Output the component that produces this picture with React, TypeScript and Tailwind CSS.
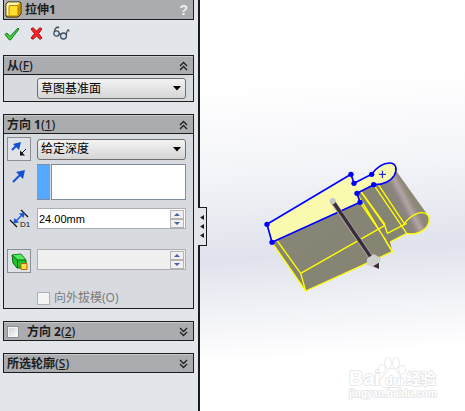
import type { ReactNode } from 'react'

const FONT = "font-['Noto_Sans','Noto_Sans_CJK_SC',sans-serif]"

interface ChevronProps {
  up?: boolean
}

// Double chevron used in the section headers
function Chevron({ up = false }: ChevronProps) {
  return (
    <svg width="9" height="10" viewBox="0 0 9 10" fill="none" stroke="#222" strokeWidth="1.4">
      {up ? <path d="M1 5l3.5-3.5L8 5M1 9l3.5-3.5L8 9" /> : <path d="M1 1l3.5 3.5L8 1M1 5l3.5 3.5L8 5" />}
    </svg>
  )
}

interface SectionProps {
  title: string
  hotkey: string
  open?: boolean
  checkbox?: boolean
  children?: ReactNode
}

function Section({ title, hotkey, open = false, checkbox = false, children }: SectionProps) {
  return (
    <section className="border border-[#1c1c1c] bg-[#d7dbe0]">
      <div className="flex h-[18px] items-center border-t border-[#c9cace] bg-[#abacb0] pr-[5px] pl-[3px] text-[#1c1c1c]">
        {checkbox && (
          <input
            type="checkbox"
            aria-label={title}
            className="mr-2 size-3 appearance-none border border-[#8e8f8f] bg-linear-to-br from-[#cbcfd5] to-white outline-1 -outline-offset-2 outline-[#f4f4f4]"
          />
        )}
        <h2 className="grow text-xs font-bold">
          {title}
          <span className="font-medium">
            (<u>{hotkey}</u>)
          </span>
        </h2>
        <button type="button" aria-label={title}>
          <Chevron up={open} />
        </button>
      </div>
      {children}
    </section>
  )
}

interface ComboProps {
  label: string
  value: string
}

function Combo({ label, value }: ComboProps) {
  return (
    <div className="relative grow">
      <select
        aria-label={label}
        className="block h-[21px] w-full appearance-none rounded-[3px] border border-[#707070] bg-linear-to-b from-[#f3f3f3] to-[#d6d6d6] pl-[3px] text-xs text-black"
      >
        <option>{value}</option>
      </select>
      <svg className="pointer-events-none absolute top-2 right-[5px]" width="8" height="5" viewBox="0 0 8 5">
        <path d="M0 0h8L4 4.5z" fill="#000" />
      </svg>
    </div>
  )
}

interface SpinBoxProps {
  label: string
  value?: string
  disabled?: boolean
}

function SpinBox({ label, value = '', disabled = false }: SpinBoxProps) {
  return (
    <div className={`flex h-[21px] grow items-center border border-[#abadb3] pr-px ${disabled ? 'bg-[#f0f0f0]' : 'bg-white'}`}>
      <input
        aria-label={label}
        defaultValue={value}
        disabled={disabled}
        className="h-full w-0 grow bg-transparent pl-px font-['Liberation_Sans',sans-serif] text-[11px] text-black"
      />
      <div className="flex w-[14px] flex-col">
        <button type="button" aria-label="+" className="flex h-[9px] items-center justify-center border border-[#b4b4b4] bg-[#f0f0f0]">
          <svg width="6" height="3" viewBox="0 0 6 3">
            <path d="M3 0l3 3H0z" fill="#4a62a8" />
          </svg>
        </button>
        <button type="button" aria-label="-" className="flex h-[9px] items-center justify-center border border-[#b4b4b4] bg-[#f0f0f0]">
          <svg width="6" height="3" viewBox="0 0 6 3">
            <path d="M0 0h6L3 3z" fill="#4a62a8" />
          </svg>
        </button>
      </div>
    </div>
  )
}

function ExtrudeIcon() {
  return (
    <svg width="17" height="17" viewBox="0 0 17 17" strokeLinejoin="round">
      <path d="M1 3l2-2h12l1 1v11l-3 3H2l-1-1z" fill="#f0b400" stroke="#2a2200" />
      <path d="M3 1.500h11.500l-2 2.500H4v10.500L1.500 14V3z" fill="#fff6b8" />
      <path d="M13 5l2.500-2.500V13L13 15z" fill="#c98a00" />
      <rect x="4" y="4.500" width="9" height="10.500" rx="1" fill="#ffe030" stroke="#b97f00" />
    </svg>
  )
}

function CheckIcon() {
  return (
    <svg width="16" height="14" viewBox="0 0 16 14" strokeLinejoin="round">
      <path d="M1 7.500l2-1.500 3 3.500L14 1l1 1-8.500 11h-1z" fill="#3fd63f" stroke="#14761a" />
    </svg>
  )
}

function CrossIcon() {
  return (
    <svg width="13" height="13" viewBox="0 0 13 13" strokeLinejoin="round">
      <path d="M1 2l2-1.300L6.500 4 10 .7 12 2 8.500 6.500 12 11l-2 1.300L6.500 9 3 12.300 1 11l3.500-4.500z" fill="#f22" stroke="#a30b0b" />
    </svg>
  )
}

function GlassesIcon() {
  return (
    <svg width="17" height="15" viewBox="0 0 17 15" fill="none" stroke="#4a5158" strokeWidth="1.300">
      <circle cx="3.500" cy="7.500" r="2.700" fill="#c8e4f6" />
      <circle cx="10.500" cy="10" r="3" fill="#c8e4f6" />
      <path d="M6 8.500q1-1.500 2 0M1.300 6Q2 1.500 5 1l1 1M13.300 9Q14 4 15 4t1 1.500" />
    </svg>
  )
}

function BlueArrow() {
  return (
    <svg width="14" height="14" viewBox="0 0 14 14">
      <path d="M1 13l8-8" stroke="#1450d2" strokeWidth="2" />
      <path d="M4 3l9-2-2 9z" fill="#1450d2" />
    </svg>
  )
}

function ReverseIcon() {
  return (
    <svg width="16" height="16" viewBox="0 0 16 16">
      <path d="M1 9l6-6" stroke="#1450d2" strokeWidth="2" />
      <path d="M2 3l8-2-2 8z" fill="#1450d2" />
      <path d="M15 8l-4 4" stroke="#111" />
      <path d="M9 9.500v5h5z" fill="#111" />
    </svg>
  )
}

function DepthIcon() {
  return (
    <svg width="23" height="21" viewBox="0 0 23 21">
      <path d="M12 2l7 7M1 12l7 7" stroke="#111" strokeWidth="1.300" />
      <path d="M6 14l8-8" stroke="#2257d6" strokeWidth="1.500" />
      <path d="M16 4.500l-1.500 5.500L10 5.500zM4 15.500l1.500-5.500L10 14.500z" fill="#2257d6" />
      <text x="11" y="19" className="font-['Liberation_Sans',sans-serif] text-[8px]" fill="#111">
        D1
      </text>
    </svg>
  )
}

function DraftIcon() {
  return (
    <svg width="17" height="17" viewBox="0 0 17 17" strokeLinejoin="round">
      <path d="M1 2l9-1 5 6v8H6L2 10z" fill="#1ec42c" stroke="#0b6b14" />
      <path d="M2 2l8-.500 4.500 5.500H7z" fill="#54e860" />
      <path d="M1 2l5.500 5H15M6.500 7v8" fill="none" stroke="#0b6b14" />
      <rect x="10" y="10.500" width="6" height="6" fill="#ffe04a" stroke="#b86a00" />
    </svg>
  )
}

// Extruded preview body: sketch profile in blue, edges in yellow
function Model() {
  return (
    <svg width="185" height="150" viewBox="0 0 555 450" strokeLinejoin="round">
      <defs>
        <linearGradient id="body" x1="0" y1="0" x2="1" y2="1">
          <stop offset="0" stopColor="#87877a" />
          <stop offset="1" stopColor="#858370" />
        </linearGradient>
        <linearGradient id="cylinder" gradientUnits="userSpaceOnUse" x1="400" y1="165" x2="476" y2="125">
          <stop offset="0" stopColor="#858372" />
          <stop offset="0.400" stopColor="#8c8480" />
          <stop offset="0.600" stopColor="#b3a5a3" />
          <stop offset="0.800" stopColor="#8e877c" />
          <stop offset="1" stopColor="#8a8a70" />
        </linearGradient>
      </defs>
      <path d="M51 277L315 157l-18-57 53-27 110 150-5 27-50 25 7 30-260 118z" fill="url(#body)" />
      <path d="M356 100L423 62l100 140q2 35-35 47-15 5-33 0l-10-26z" fill="url(#cylinder)" />

      <g fill="none" stroke="#ff0" strokeWidth="4">
        <path d="M51 277l101 146 260-118-20-32" />
        <path d="M65 270l72 100 15 53M137 370l253-144" />
        <path d="M300 100l90 128 7 22 58-30" />
        <path d="M306 130l106 175M315 157l78 114M312 116l78 108" />
        <path d="M356 104l99 146-50 26M366 98l84 126" />
        <path d="M445 225c20-30 48-42 67-35 16 8 14 36-8 51-18 12-36 12-49 9" />
      </g>

      <path
        d="M36 223L288 73l9 27 53-27c14-20 35-35 57-34 17 2 20 20 11 37-10 17-34 29-62 28l-50 26 9 27L51 277z"
        fill="#fafaaf"
        stroke="#00f"
        strokeWidth="5"
      />
      <g fill="#00f">
        <circle cx="36" cy="223" r="8" />
        <circle cx="288" cy="73" r="8" />
        <circle cx="297" cy="100" r="8" />
        <circle cx="350" cy="73" r="8" />
        <circle cx="356" cy="104" r="8" />
        <circle cx="306" cy="130" r="8" />
        <circle cx="315" cy="157" r="8" />
        <circle cx="51" cy="277" r="8" />
      </g>
      <path d="M372 73h21M382 62v22" stroke="#00f" strokeWidth="3" />

      <path d="M233 155L348 322" stroke="#aaa6a8" strokeWidth="15" />
      <path d="M235 156L348 322" stroke="#3a2d33" strokeWidth="10" />
      <circle cx="233" cy="153" r="9" fill="#c6c6c2" />
      <path d="M336 326l20-14 22 12-4 14-19 14-20-8z" fill="#cfcfcf" />
      <path d="M354 349l18-11v19z" fill="#3a2d33" />
    </svg>
  )
}

function Watermark() {
  return (
    <svg
      width="92"
      height="44"
      viewBox="0 0 92 44"
      fill="#fff"
      stroke="#e3e3e5"
      strokeWidth="1.500"
      strokeLinejoin="round"
      className="font-['Liberation_Sans','Noto_Sans_CJK_SC',sans-serif] font-bold [paint-order:stroke]"
    >
      <text x="1" y="28" className="text-[20px]">Bai</text>
      <ellipse cx="34" cy="12" rx="3" ry="4" />
      <ellipse cx="40" cy="6" rx="3" ry="5" />
      <ellipse cx="48" cy="6" rx="3" ry="5" />
      <ellipse cx="54" cy="13" rx="3" ry="4" />
      <path d="M44 12c5 0 6 6 10 9 4 4 1 9-4 9H38c-6 0-8-5-4-9 4-3 5-9 10-9z" />
      <text x="37" y="28" className="text-[13px]">du</text>
      <text x="58" y="27" className="text-[15px]">经验</text>
      <text x="1" y="40" className="text-[10px]">jingyan.baidu.com</text>
    </svg>
  )
}

export default function App() {
  return (
    <div className={`flex h-screen overflow-hidden bg-white leading-4 ${FONT}`}>
      <aside className="relative w-[200px] shrink-0 border-r-2 border-[#1c1c1c] bg-[#e2e6eb] pr-1 pl-[3px]">
        <header className="flex h-5 items-center border-x border-b border-[#1c1c1c] bg-[#abacb0] pr-1 pl-px text-[#1c1c1c]">
          <ExtrudeIcon />
          <h1 className="grow pl-[3px] text-xs font-bold">拉伸1</h1>
          <button type="button" className="px-px font-['Liberation_Sans',sans-serif] text-sm font-bold text-[#f0f0f0]">
            ?
          </button>
        </header>

        <div className="flex h-[35px] items-center gap-[10px] pb-2 pl-px">
          <button type="button" aria-label="OK"><CheckIcon /></button>
          <button type="button" aria-label="Cancel"><CrossIcon /></button>
          <button type="button" aria-label="Preview"><GlassesIcon /></button>
        </div>

        <div className="flex flex-col gap-3">
          <Section title="从" hotkey="F" open>
            <div className="flex border-t border-[#1c1c1c] pt-[3px] pr-[7px] pb-[2px] pl-[33px]">
              <Combo label="从" value="草图基准面" />
            </div>
          </Section>

          <Section title="方向 1" hotkey="1" open>
            <div className="flex flex-col border-t border-[#1c1c1c] pt-[3px] pr-[7px] pb-[2px] pl-[3px]">
              <div className="flex items-center gap-[6px]">
                <button type="button" aria-label="反向" className="flex size-6 items-center justify-center border border-[#8c8e92] bg-[#dfe2e6]">
                  <ReverseIcon />
                </button>
                <Combo label="方向 1" value="给定深度" />
              </div>
              <div className="mt-[3px] flex">
                <div className="w-[30px] pt-[5px] pl-[5px]"><BlueArrow /></div>
                <div className="h-9 w-[13px] border-y border-[#7f8ba0] bg-[#55aaff]" />
                <div className="ml-px h-9 grow border border-[#7f8ba0] bg-white" />
              </div>
              <div className="mt-2 flex">
                <div className="w-[30px] pl-[2px]"><DepthIcon /></div>
                <SpinBox label="深度" value="24.00mm" />
              </div>
              <div className="mt-5 flex items-start gap-[6px]">
                <button type="button" aria-label="拔模" className="flex size-6 items-center justify-center border border-[#8c8e92] bg-[#dfe2e6]">
                  <DraftIcon />
                </button>
                <SpinBox label="拔模角度" disabled />
              </div>
              <label className="mt-4 flex items-center gap-1 pt-px pl-[30px] text-xs text-[#7d7d7d]">
                <input type="checkbox" disabled className="size-[13px] appearance-none border border-[#b1b1b1] bg-[#f4f4f4]" />
                向外拔模(O)
              </label>
            </div>
          </Section>

          <Section title="方向 2" hotkey="2" checkbox />
          <Section title="所选轮廓" hotkey="S" />
        </div>

        <button
          type="button"
          aria-label="Collapse"
          className="absolute top-[207px] -right-[9px] flex h-[39px] w-[9px] flex-col items-center justify-center border border-l-0 border-[#1c1c1c] bg-[#e2e6eb]"
        >
          <svg width="4" height="24" viewBox="0 0 4 24" fill="#1c1c1c">
            <path d="M4 0v5L0 2.500zM4 9v5L0 11.500zM4 18v5L0 20.500z" />
          </svg>
        </button>
      </aside>

      <main className="flex grow flex-col justify-between bg-linear-[176deg,#fff_20%,#f4f5f9_40%,#e0e3ec_61%,#f1f2f7_73%,#fff_85%] pt-[150px] pr-7 pb-[10px] pl-[55px]">
        <Model />
        <div className="self-end"><Watermark /></div>
      </main>
    </div>
  )
}
